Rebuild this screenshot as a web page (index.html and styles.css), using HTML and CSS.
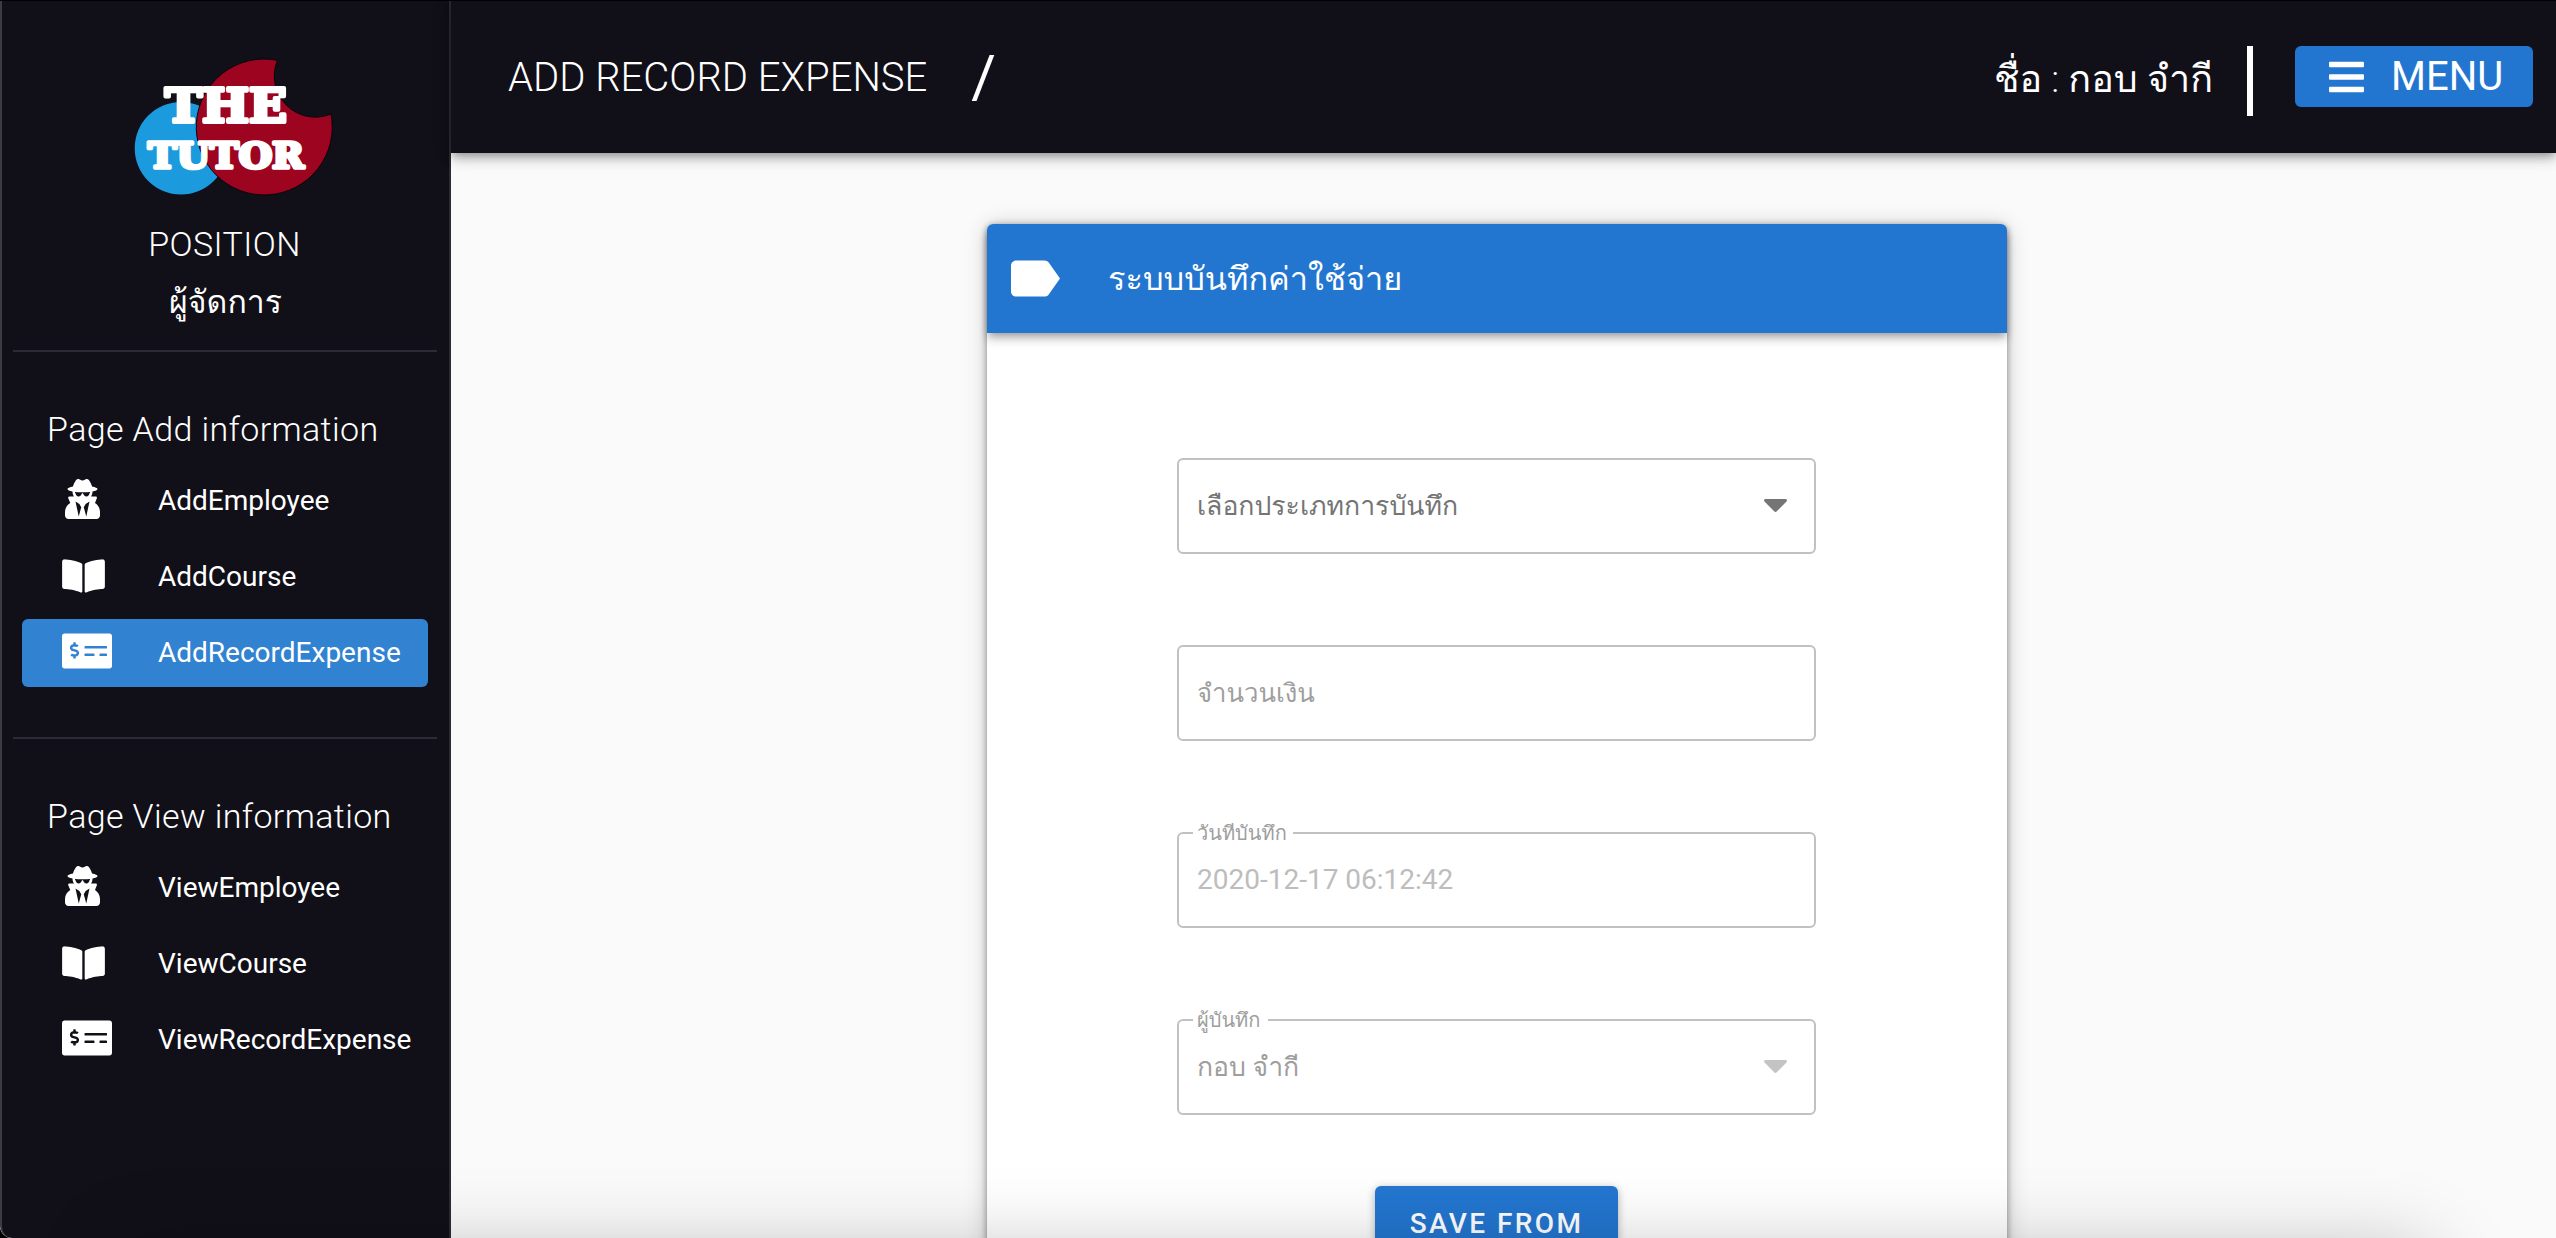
FILE: index.html
```html
<!DOCTYPE html>
<html lang="th">
<head>
<meta charset="utf-8">
<title>The Tutor</title>
<link rel="stylesheet" href="styles.css">
</head>
<body>
<svg class="sprite" width="0" height="0" aria-hidden="true">
  <symbol id="secret" viewBox="0 0 448 512"><path d="M383.9 308.3l23.9-62.6c4-10.5-3.7-21.7-15-21.7h-58.5c11-18.9 17.8-40.6 17.8-64v-.3c39.2-7.8 64-19.1 64-31.7 0-13.3-27.3-25.1-70.1-33-9.2-32.8-27-65.8-40.6-82.8-9.5-11.9-25.9-15.6-39.5-8.8l-27.6 13.8c-9 4.5-19.6 4.5-28.6 0L182.1 3.4c-13.6-6.8-30-3.1-39.5 8.8-13.5 17-31.4 50-40.6 82.8-42.7 7.9-70 19.7-70 33 0 12.6 24.8 23.9 64 31.7v.3c0 23.4 6.8 45.1 17.8 64H56.3c-11.5 0-19.2 11.7-14.7 22.3l25.8 60.2C27.3 329.8 0 372.7 0 422.4v44.8C0 491.9 20.1 512 44.8 512h358.4c24.7 0 44.8-20.1 44.8-44.8v-44.8c0-48.4-25.8-90.4-64.1-114.1zM176 480l-41.6-192 49.6 32 24 40-32 120zm96 0l-32-120 24-40 49.6-32L272 480zm41.7-298.5c-3.9 11.9-7 24.6-16.5 33.4-10.1 9.3-48 22.4-64-25-2.8-8.4-15.4-8.4-18.3 0-17 50.2-56 32.4-64 25-9.5-8.8-12.7-21.5-16.5-33.4-.8-2.5-6.3-5.7-6.3-5.8v-10.8c28.3 3.6 61 5.8 96 5.8s67.7-2.1 96-5.8v10.8c-.1.1-5.6 3.2-6.4 5.8z"/></symbol>
  <symbol id="book" viewBox="0 0 576 512"><path d="M542.22 32.05c-54.8 3.11-163.72 14.43-230.96 55.59-4.64 2.84-7.27 7.89-7.27 13.17v363.87c0 11.55 12.63 18.85 23.28 13.49 69.18-34.82 169.23-44.32 218.7-46.92 16.89-.89 30.02-14.43 30.02-30.66V62.75c.01-17.71-15.35-31.74-33.77-30.7zM264.73 87.64C197.5 46.48 88.58 35.17 33.78 32.05 15.36 31.01 0 45.04 0 62.75V400.6c0 16.24 13.13 29.78 30.02 30.66 49.49 2.6 149.59 12.11 218.77 46.95 10.62 5.35 23.21-1.94 23.21-13.46V100.63c0-5.29-2.62-10.14-7.27-12.99z"/></symbol>
  <symbol id="check" viewBox="0 0 640 512"><path d="M608 32H32C14.33 32 0 46.33 0 64v384c0 17.67 14.33 32 32 32h576c17.67 0 32-14.33 32-32V64c0-17.67-14.33-32-32-32zM176 327.88V344c0 4.42-3.58 8-8 8h-16c-4.42 0-8-3.58-8-8v-16.29c-11.29-.58-22.27-4.52-31.37-11.35-3.9-2.93-4.1-8.77-.57-12.14l11.75-11.21c2.77-2.64 6.89-2.76 10.13-.73 3.87 2.42 8.26 3.72 12.82 3.72h28.11c6.5 0 11.8-5.92 11.8-13.19 0-5.95-3.61-11.19-8.77-12.73l-45-13.5c-18.59-5.58-31.58-23.42-31.58-43.39 0-24.52 19.05-44.44 42.67-45.07V152c0-4.42 3.58-8 8-8h16c4.42 0 8 3.58 8 8v16.29c11.29.58 22.27 4.51 31.37 11.35 3.9 2.93 4.1 8.77.57 12.14l-11.75 11.21c-2.77 2.64-6.89 2.76-10.13.73-3.87-2.43-8.26-3.72-12.82-3.72h-28.11c-6.5 0-11.8 5.92-11.8 13.19 0 5.95 3.61 11.19 8.77 12.73l45 13.5c18.59 5.58 31.58 23.42 31.58 43.39 0 24.53-19.05 44.44-42.67 45.07zM416 312c0 4.42-3.58 8-8 8H296c-4.42 0-8-3.58-8-8v-16c0-4.42 3.58-8 8-8h112c4.42 0 8 3.58 8 8v16zm160 0c0 4.42-3.58 8-8 8h-80c-4.42 0-8-3.58-8-8v-16c0-4.42 3.58-8 8-8h80c4.42 0 8 3.58 8 8v16zm0-96c0 4.42-3.58 8-8 8H296c-4.42 0-8-3.58-8-8v-16c0-4.42 3.58-8 8-8h272c4.42 0 8 3.58 8 8v16z"/></symbol>
  <symbol id="caret" viewBox="0 0 23 13"><path d="M1.6 0h19.8c1.4 0 2.1 1.5 1.1 2.5l-9.7 9.8c-.8.8-1.8.8-2.6 0L.5 2.5C-.5 1.5.2 0 1.6 0z"/></symbol>
</svg>
<div class="app">
  <aside class="sidebar">
    <svg class="logo" viewBox="0 0 204 144" role="img" aria-label="The Tutor">
      <circle class="logo-blue" cx="48" cy="93.3" r="46.3"/>
      <path class="logo-red" d="M144.500 5.300A68 68 0 1 0 198 59A41 41 0 0 1 144.500 5.300z"/>
      <text class="logo-text logo-the" x="32" y="67" textLength="122" lengthAdjust="spacingAndGlyphs">THE</text>
      <text class="logo-text logo-tutor" x="15" y="112.5" textLength="156" lengthAdjust="spacingAndGlyphs">TUTOR</text>
    </svg>
    <div class="position">POSITION</div>
    <div class="role">ผู้จัดการ</div>
    <hr class="divider">
    <nav class="group">
      <h2 class="group-title">Page Add information</h2>
      <a class="item"><svg class="icon icon-secret"><use href="#secret"/></svg><span>AddEmployee</span></a>
      <a class="item"><svg class="icon icon-book"><use href="#book"/></svg><span>AddCourse</span></a>
      <a class="item active"><svg class="icon icon-check"><use href="#check"/></svg><span>AddRecordExpense</span></a>
    </nav>
    <hr class="divider">
    <nav class="group">
      <h2 class="group-title">Page View information</h2>
      <a class="item"><svg class="icon icon-secret"><use href="#secret"/></svg><span>ViewEmployee</span></a>
      <a class="item"><svg class="icon icon-book"><use href="#book"/></svg><span>ViewCourse</span></a>
      <a class="item"><svg class="icon icon-check"><use href="#check"/></svg><span>ViewRecordExpense</span></a>
    </nav>
  </aside>
  <div class="content">
    <header class="topbar">
      <h1 class="title">ADD RECORD EXPENSE</h1>
      <span class="slash">/</span>
      <span class="user">ชื่อ : กอบ จำกี</span>
      <span class="bar"></span>
      <button class="menu"><svg class="menu-icon" viewBox="0 0 448 512"><path d="M16 132h416c8.837 0 16-7.163 16-16V76c0-8.837-7.163-16-16-16H16C7.163 60 0 67.163 0 76v40c0 8.837 7.163 16 16 16zm0 160h416c8.837 0 16-7.163 16-16v-40c0-8.837-7.163-16-16-16H16c-8.837 0-16 7.163-16 16v40c0 8.837 7.163 16 16 16zm0 160h416c8.837 0 16-7.163 16-16v-40c0-8.837-7.163-16-16-16H16c-8.837 0-16 7.163-16 16v40c0 8.837 7.163 16 16 16z"/></svg><span>MENU</span></button>
    </header>
    <main class="main">
      <section class="card">
        <div class="card-head">
          <svg class="label-icon" viewBox="3 5 19 14"><path d="M17.63 5.84C17.27 5.33 16.67 5 16 5L5 5.01C3.9 5.01 3 5.9 3 7v10c0 1.1.9 1.99 2 1.99L16 19c.67 0 1.27-.33 1.63-.84L22 12l-4.37-6.16z"/></svg>
          <span class="card-title">ระบบบันทึกค่าใช้จ่าย</span>
        </div>
        <form class="form">
          <div class="field select"><span class="hint">เลือกประเภทการบันทึก</span><svg class="caret"><use href="#caret"/></svg></div>
          <div class="field"><span class="placeholder">จำนวนเงิน</span></div>
          <div class="field disabled"><span class="legend">วันทีบันทึก</span><span class="date">2020-12-17 06:12:42</span></div>
          <div class="field disabled"><span class="legend legend-by">ผู้บันทึก</span><span class="name">กอบ จำกี</span><svg class="caret"><use href="#caret"/></svg></div>
          <button type="button" class="save">SAVE FROM</button>
        </form>
      </section>
    </main>
  </div>
  <div class="dock-shadow"></div>
</div>
</body>
</html>
```
FILE: styles.css
```css
* { box-sizing: border-box; }
body {
  margin: 0;
  background: #000;
  font-family: Roboto, Loma, sans-serif;
}
.sprite { position: absolute; }
.app {
  position: relative;
  display: flex;
  width: 2556px;
  height: 1238px;
  overflow: hidden;
  border-top: 1px solid #000;
  border-bottom-left-radius: 12px;
  background: #fafafa;
}
.sidebar {
  width: 451px;
  flex: none;
  background: #110f18;
  border-left: 2px solid #3c3b42;
  border-right: 2px solid #2c2b34;
  border-bottom-left-radius: 12px;
  color: #fff;
  display: flex;
  flex-direction: column;
}
.logo { width: 204px; height: 144px; margin: 54px 0 0 131px; flex: none; }
.logo-blue { fill: #1b9bde; }
.logo-red { fill: #9c0420; stroke: #08060c; stroke-width: 1; }
.logo-text {
  font-family: "DejaVu Serif", serif;
  font-weight: 700;
  fill: #fff;
  stroke: #fff;
  stroke-width: 4;
  stroke-linejoin: round;
}
.logo-the { font-size: 47.5px; }
.logo-tutor { font-size: 34.5px; stroke-width: 3.5; }
.position {
  margin-top: 25px;
  line-height: 40px;
  text-align: center;
  font-size: 34px;
  font-weight: 300;
  letter-spacing: .4px;
  padding-right: 2px;
}
.role { margin-top: 18px; line-height: 40px; text-align: center; font-size: 32px; font-weight: 300; }
.divider { width: 424px; height: 2px; margin: 28px 0 0 11px; border: 0; background: #2c2a34; flex: none; }
.group { padding: 56px 21px 0 20px; display: flex; flex-direction: column; gap: 8px; }
.group + .divider { margin-top: 50px; }
.group-title { margin: 0 0 9px 25px; line-height: 42px; font-size: 34px; font-weight: 300; letter-spacing: .38px; white-space: nowrap; }
.item {
  height: 68px;
  border-radius: 6px;
  display: flex;
  align-items: center;
  font-size: 28px;
  white-space: nowrap;
}
.item span { flex: 1; margin-bottom: 2px; }
.item.active { background: #3182d1; }
.icon { fill: currentColor; flex: none; height: 40px; margin-bottom: 4px; }
.icon-secret { width: 35px; margin-left: 43px; margin-right: 58px; }
.icon-book { width: 43px; height: 38px; margin-left: 40px; margin-right: 53px; margin-bottom: 3px; }
.icon-check { width: 50px; margin-left: 40px; margin-right: 46px; }
.content { flex: 1; display: flex; flex-direction: column; min-width: 0; }
.topbar {
  position: relative;
  height: 152px;
  flex: none;
  background: #110f18;
  color: #fff;
  display: flex;
  align-items: flex-start;
  padding: 45px 23px 0 57px;
  box-shadow: 0 4px 8px -2px rgba(0,0,0,.3), 0 8px 10px rgba(0,0,0,.12), 0 2px 20px rgba(0,0,0,.1);
}
.title { margin: 8px 0 0; line-height: 47px; font-size: 40px; font-weight: 300; white-space: nowrap; }
.slash { margin: -4px 0 0 44px; line-height: 70px; font-size: 60px; }
.user { margin: 10px 34px 0 auto; line-height: 47px; font-size: 37.7px; font-weight: 300; white-space: nowrap; }
.bar { width: 6px; height: 70px; margin-right: 42px; background: #fff; }
.menu {
  width: 238px;
  height: 61px;
  padding: 0 0 0 34px;
  border: 0;
  border-radius: 6px;
  background: #2376d0;
  color: #fff;
  font: 400 40px Roboto, sans-serif;
  display: flex;
  align-items: center;
  gap: 27px;
}
.menu-icon { width: 35px; height: 40px; fill: #fff; }
.main { flex: 1; display: flex; justify-content: center; align-items: flex-start; padding: 71px 13px 0 0; min-height: 0; }
.card {
  width: 1020px;
  height: 1100px;
  border-radius: 6px;
  background: #fff;
  box-shadow: 0 4px 8px -2px rgba(0,0,0,.35), 0 2px 22px rgba(0,0,0,.2), 0 0 6px rgba(0,0,0,.2);
}
.card-head {
  height: 109px;
  border-radius: 6px 6px 0 0;
  background: #2376d0;
  color: #fff;
  display: flex;
  align-items: center;
  padding-left: 24px;
  gap: 48px;
  box-shadow: 0 4px 8px -2px rgba(0,0,0,.35), 0 8px 10px rgba(0,0,0,.12);
}
.label-icon { width: 49px; height: 37px; fill: #fff; }
.card-title { font-size: 32.5px; margin-bottom: 1px; }
.form { padding: 125px 191px 0 190px; display: flex; flex-direction: column; gap: 91px; }
.field {
  position: relative;
  height: 96px;
  border: 2px solid #c1c1c1;
  border-radius: 6px;
  display: flex;
  align-items: center;
  justify-content: space-between;
  padding: 0 27px 0 18px;
  font-size: 28px;
  color: #757575;
}
.placeholder { color: #9e9e9e; }
.date { color: #bdbdbd; margin-bottom: 2px; }
.name { color: #9e9e9e; }
.hint, .placeholder, .name { font-size: 26.6px; margin-bottom: 2px; }
.placeholder { font-size: 25.7px; }
.caret { width: 23px; height: 13px; margin-bottom: 1px; fill: #757575; }
.disabled .caret { fill: #c4c4c4; }
.legend { position: absolute; left: 14px; top: -17px; width: 100px; padding-left: 4px; line-height: 32px; font-size: 20px; color: #9e9e9e; background: #fff; white-space: nowrap; }
.legend-by { width: 75px; }
.save {
  align-self: center;
  width: 243px;
  height: 76px;
  margin-top: -20px;
  border: 0;
  border-radius: 6px;
  background: #2376d0;
  color: #fff;
  font: 500 28px Roboto, sans-serif;
  letter-spacing: 2.4px;
  padding: 0 6px 2px;
  box-shadow: 0 2px 8px rgba(0,0,0,.3);
}
.dock-shadow {
  position: absolute;
  left: 120px;
  right: 126px;
  top: 1250px;
  height: 200px;
  box-shadow: 0 0 80px rgba(0,0,0,.25);
}
```
